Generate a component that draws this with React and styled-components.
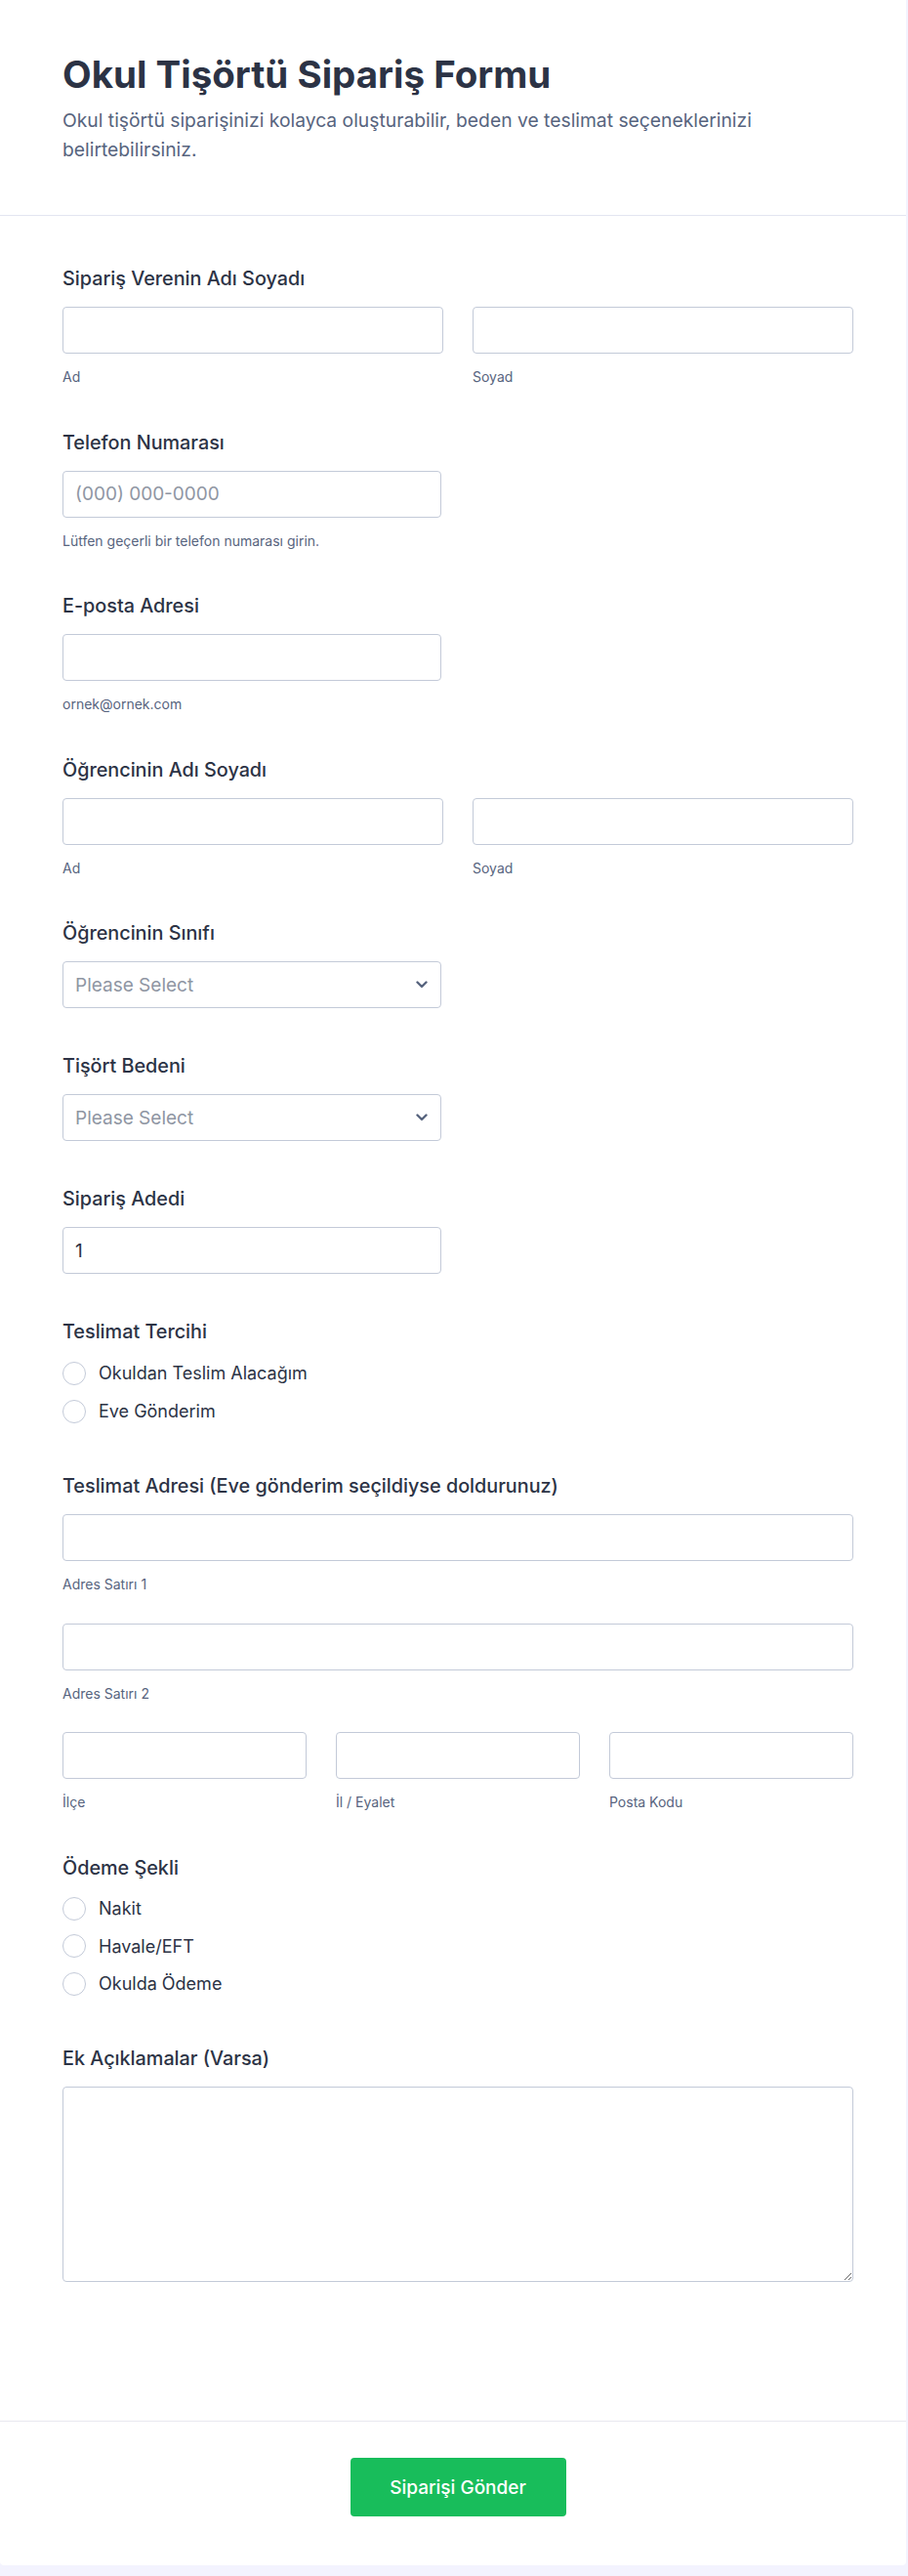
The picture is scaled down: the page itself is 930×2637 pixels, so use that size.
import React from "react";
import styled, { createGlobalStyle } from "styled-components";

const GlobalStyle = createGlobalStyle`
  * { box-sizing: border-box; }
  body {
    margin: 0;
    background: #f3f3fe;
    font-family: Inter, "Noto Sans", "Liberation Sans", sans-serif;
    color: #2c3345;
  }
`;

const Card = styled.div`
  width: 928px;
  background: #ffffff;
  border-radius: 0 0 4px 4px;
  margin-bottom: 10px;
`;

const Header = styled.header`
  padding: 54px 54px 52px 64px;
  border-bottom: 1px solid #e3e5f0;
`;

const Title = styled.h1`
  margin: 0;
  font-size: 38.5px;
  line-height: 44px;
  font-weight: 700;
  color: #2c3345;
`;

const Description = styled.p`
  margin: 10px 0 0;
  font-size: 19.3px;
  line-height: 30px;
  color: #57647e;
`;

const FormBody = styled.div`
  padding: 52px 54px 142px 64px;
  display: flex;
  flex-direction: column;
  gap: 45px;
`;

const Field = styled.div`
  display: flex;
  flex-direction: column;
  padding-bottom: ${(p) => p.$extra || 0}px;
`;

const Label = styled.label`
  display: block;
  font-size: 19.8px;
  line-height: 24px;
  font-weight: 500;
  color: #2c3345;
  margin-bottom: ${(p) => (p.$tight ? "11px" : "17px")};
`;

const Row = styled.div`
  display: grid;
  grid-template-columns: repeat(${(p) => p.$cols || 1}, 1fr);
  column-gap: 30px;
  width: ${(p) => p.$width || "100%"};
`;

const Stack = styled.div`
  display: flex;
  flex-direction: column;
  gap: 30px;
`;

const Cell = styled.div`
  display: flex;
  flex-direction: column;
`;

const Input = styled.input`
  width: 100%;
  height: 48px;
  border: 1px solid #c3cad8;
  border-radius: 4px;
  padding: 0 12px;
  font-family: inherit;
  font-size: 19px;
  color: #2c3345;
  background: #fff;
  &::placeholder {
    color: #8f96a3;
  }
`;

const SubLabel = styled.span`
  margin-top: 15px;
  font-size: 14px;
  line-height: 18.5px;
  color: #57647e;
`;

const SelectWrap = styled.div`
  position: relative;
  width: 388px;
`;

const Select = styled.select`
  width: 100%;
  height: 48px;
  border: 1px solid #c3cad8;
  border-radius: 4px;
  padding: 0 36px 0 12px;
  font-family: inherit;
  font-size: 19px;
  color: #8f96a3;
  background: #fff;
  appearance: none;
`;

const Chevron = styled.svg`
  position: absolute;
  right: 14px;
  top: 50%;
  transform: translateY(-50%);
  pointer-events: none;
`;

const RadioList = styled.div`
  display: flex;
  flex-direction: column;
`;

const RadioRow = styled.label`
  display: flex;
  align-items: center;
  gap: 13px;
  height: ${(p) => p.$h || 39}px;
  font-size: 18px;
  color: #2c3345;
`;

const RadioCircle = styled.span`
  width: 24px;
  height: 24px;
  border-radius: 50%;
  border: 1px solid #c3cad8;
  background: #fff;
  flex-shrink: 0;
`;

const TextArea = styled.textarea`
  width: 100%;
  height: 200px;
  border: 1px solid #c3cad8;
  border-radius: 4px;
  padding: 12px;
  font-family: inherit;
  font-size: 19px;
  resize: vertical;
  display: block;
`;

const Footer = styled.div`
  border-top: 1px solid #e8e8f0;
  padding: 37px 54px 50px 64px;
  display: flex;
  justify-content: center;
`;

const SubmitButton = styled.button`
  width: 221px;
  height: 60px;
  border: none;
  border-radius: 4px;
  background: #18bd5b;
  color: #fff;
  font-family: inherit;
  font-size: 19px;
  font-weight: 500;
  cursor: pointer;
`;

const SelectField = ({ label }) => (
  <Field $extra={2}>
    <Label>{label}</Label>
    <SelectWrap>
      <Select defaultValue="">
        <option value="" disabled>
          Please Select
        </option>
      </Select>
      <Chevron width="12" height="8" viewBox="0 0 12 8">
        <path d="M1.5 1.5 6 6l4.5-4.5" fill="none" stroke="#57647e" strokeWidth="2.4" strokeLinecap="round" strokeLinejoin="round" />
      </Chevron>
    </SelectWrap>
  </Field>
);

const RadioField = ({ label, options, rowHeight }) => (
  <Field>
    <Label $tight>{label}</Label>
    <RadioList>
      {options.map((o) => (
        <RadioRow key={o} $h={rowHeight}>
          <RadioCircle />
          {o}
        </RadioRow>
      ))}
    </RadioList>
  </Field>
);

const NameField = ({ label }) => (
  <Field>
    <Label>{label}</Label>
    <Row $cols={2}>
      <Cell>
        <Input />
        <SubLabel>Ad</SubLabel>
      </Cell>
      <Cell>
        <Input />
        <SubLabel>Soyad</SubLabel>
      </Cell>
    </Row>
  </Field>
);

export default function App() {
  return (
    <>
      <GlobalStyle />
      <Card>
        <Header>
          <Title>Okul Tişörtü Sipariş Formu</Title>
          <Description>
            Okul tişörtü siparişinizi kolayca oluşturabilir, beden ve teslimat seçeneklerinizi
            <br />
            belirtebilirsiniz.
          </Description>
        </Header>
        <FormBody>
          <NameField label="Sipariş Verenin Adı Soyadı" />

          <Field>
            <Label>Telefon Numarası</Label>
            <Row $width="388px">
              <Cell>
                <Input placeholder="(000) 000-0000" />
                <SubLabel>Lütfen geçerli bir telefon numarası girin.</SubLabel>
              </Cell>
            </Row>
          </Field>

          <Field>
            <Label>E-posta Adresi</Label>
            <Row $width="388px">
              <Cell>
                <Input type="email" />
                <SubLabel>ornek@ornek.com</SubLabel>
              </Cell>
            </Row>
          </Field>

          <NameField label="Öğrencinin Adı Soyadı" />

          <SelectField label="Öğrencinin Sınıfı" />
          <SelectField label="Tişört Bedeni" />

          <Field $extra={2}>
            <Label>Sipariş Adedi</Label>
            <Row $width="388px">
              <Input defaultValue="1" />
            </Row>
          </Field>

          <RadioField label="Teslimat Tercihi" options={["Okuldan Teslim Alacağım", "Eve Gönderim"]} />

          <Field>
            <Label>Teslimat Adresi (Eve gönderim seçildiyse doldurunuz)</Label>
            <Stack>
              <Cell>
                <Input />
                <SubLabel>Adres Satırı 1</SubLabel>
              </Cell>
              <Cell>
                <Input />
                <SubLabel>Adres Satırı 2</SubLabel>
              </Cell>
              <Row $cols={3}>
                <Cell>
                  <Input />
                  <SubLabel>İlçe</SubLabel>
                </Cell>
                <Cell>
                  <Input />
                  <SubLabel>İl / Eyalet</SubLabel>
                </Cell>
                <Cell>
                  <Input />
                  <SubLabel>Posta Kodu</SubLabel>
                </Cell>
              </Row>
            </Stack>
          </Field>

          <RadioField label="Ödeme Şekli" options={["Nakit", "Havale/EFT", "Okulda Ödeme"]} rowHeight={38.5} />

          <Field>
            <Label>Ek Açıklamalar (Varsa)</Label>
            <TextArea />
          </Field>
        </FormBody>
        <Footer>
          <SubmitButton type="button">Siparişi Gönder</SubmitButton>
        </Footer>
      </Card>
    </>
  );
}
